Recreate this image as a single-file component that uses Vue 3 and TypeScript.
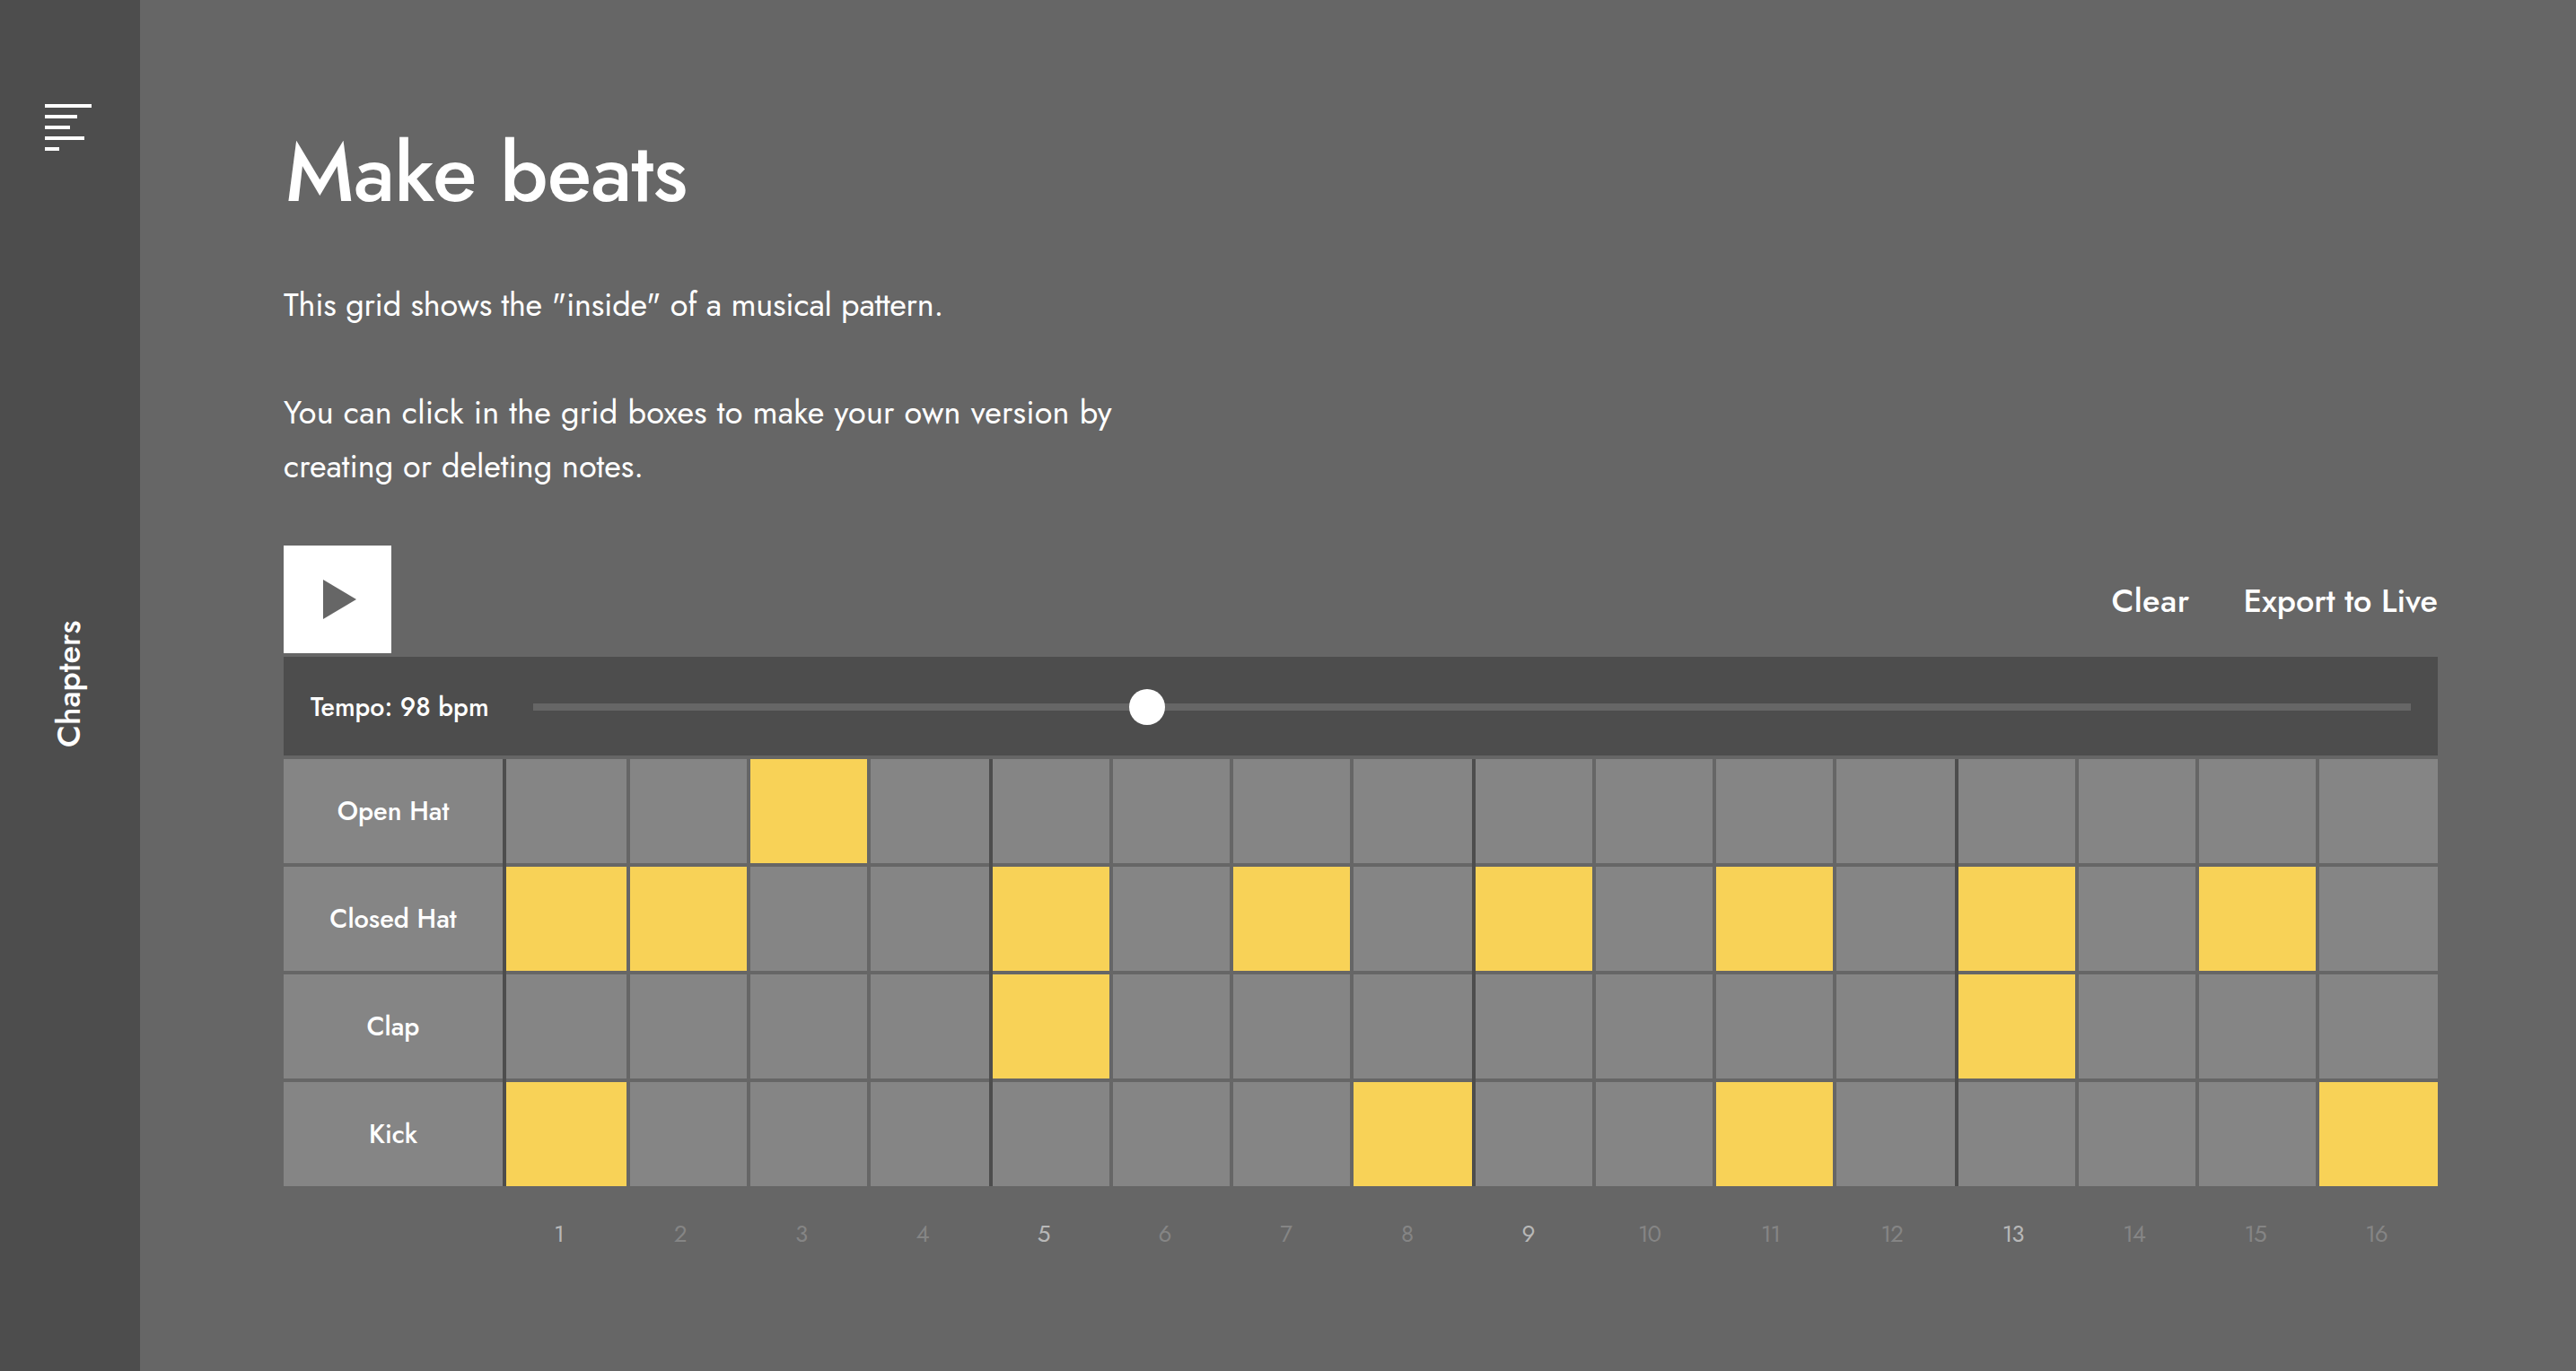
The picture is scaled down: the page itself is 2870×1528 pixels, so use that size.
<script setup lang="ts">
interface Track {
  name: string
  notes: number[]
}

const tracks: Track[] = [
  { name: 'Open Hat', notes: [3] },
  { name: 'Closed Hat', notes: [1, 2, 5, 7, 9, 11, 13, 15] },
  { name: 'Clap', notes: [5, 13] },
  { name: 'Kick', notes: [1, 8, 11, 16] },
]
const steps = Array.from({ length: 16 }, (_, i) => i + 1)
const isDownbeat = (step: number) => step % 4 === 1
</script>

<template>
  <div class="page">
    <nav class="sidebar">
      <svg class="menu" width="52" height="52" viewBox="0 0 52 52" fill="#fff">
        <rect width="52" height="4" />
        <rect y="12" width="36" height="4" />
        <rect y="24" width="28" height="4" />
        <rect y="36" width="44" height="4" />
        <rect y="48" width="16" height="4" />
      </svg>
      <span class="chapters">Chapters</span>
    </nav>
    <main class="content">
      <h1>Make beats</h1>
      <p class="intro">This grid shows the "inside" of a musical pattern.</p>
      <p class="hint"><span>You can click in the grid boxes to make your own version by</span><br />creating or deleting notes.</p>
      <div class="toolbar">
        <button class="play" aria-label="Play">
          <svg width="37" height="44" viewBox="0 0 37 44"><path d="M0 0L37 22L0 44Z" fill="#666" /></svg>
        </button>
        <div class="actions">
          <a class="clear">Clear</a>
          <a>Export to Live</a>
        </div>
      </div>
      <div class="tempo">
        <span class="tempo-label">Tempo: 98 bpm</span>
        <div class="slider"><div class="thumb"></div></div>
      </div>
      <div class="grid">
        <div v-for="track in tracks" :key="track.name" class="row">
          <div class="name"><span>{{ track.name }}</span></div>
          <div
            v-for="step in steps"
            :key="step"
            class="cell"
            :class="{ on: track.notes.includes(step), downbeat: isDownbeat(step) }"
          ></div>
        </div>
      </div>
      <div class="counts">
        <span v-for="step in steps" :key="step" :class="{ strong: isDownbeat(step) }">{{ step }}</span>
      </div>
    </main>
  </div>
</template>

<style>
body {
  background: #666;
}
</style>

<style scoped>
.page {
  display: flex;
  width: 2870px;
  height: 1528px;
  overflow: hidden;
  background: #666;
  color: #fff;
  font-family: Jost, Lato, sans-serif;
  font-weight: 400;
}
.sidebar {
  width: 156px;
  flex: none;
  box-sizing: border-box;
  background: #4d4d4d;
  display: flex;
  flex-direction: column;
  padding: 101px 0 0 50px;
}
.menu {
  display: block;
  margin-top: 15px;
}
.chapters {
  margin: 523px 0 0 -4px;
  width: 60px;
  height: 150px;
  line-height: 60px;
  writing-mode: vertical-rl;
  transform: rotate(180deg);
  font-size: 36px;
  font-weight: 500;
  text-align: right;
}
.content {
  width: 2400px;
  padding: 133px 0 0 160px;
}
h1 {
  margin: 0 0 0 2px;
  font-size: 91px;
  line-height: 120px;
  font-weight: 500;
  letter-spacing: -0.7px;
}
p {
  margin: 0;
  font-size: 36px;
  line-height: 60px;
}
.intro {
  margin-top: 56px;
  letter-spacing: -0.23px;
}
.hint {
  margin-top: 60px;
}
.hint span {
  letter-spacing: 0.2px;
}
.toolbar {
  margin-top: 59px;
  height: 120px;
  display: flex;
  justify-content: space-between;
  align-items: center;
}
.play {
  width: 120px;
  height: 120px;
  padding: 0 0 0 4px;
  border: 0;
  background: #fff;
  display: flex;
  align-items: center;
  justify-content: center;
}
.actions {
  display: flex;
  gap: 60px;
  padding-top: 1px;
  font-size: 36px;
  font-weight: 500;
}
.clear {
  letter-spacing: 0.5px;
}
.tempo {
  box-sizing: border-box;
  margin-top: 4px;
  height: 110px;
  background: #4d4d4d;
  display: flex;
  align-items: center;
  padding: 2px 30px 0;
}
.tempo-label {
  width: 248px;
  flex: none;
  font-size: 28.5px;
  font-weight: 500;
}
.slider {
  flex: 1;
  height: 8px;
  background: #666;
  display: flex;
  align-items: center;
}
.thumb {
  width: 40px;
  height: 40px;
  margin-left: 664px;
  border-radius: 50%;
  background: #fff;
}
.grid {
  margin-top: 4px;
  display: flex;
  flex-direction: column;
  gap: 4px;
}
.row {
  display: grid;
  grid-template-columns: 244px 134px 130px 130px 132px 130px 130px 130px 132px 130px 130px 130px 132px 130px 130px 130px 132px;
  column-gap: 4px;
  height: 116px;
}
.name {
  background: #858585;
  display: flex;
  align-items: center;
  justify-content: center;
  font-size: 29px;
  line-height: 40px;
  font-weight: 500;
}
.cell {
  position: relative;
  background: #858585;
}
.cell.on {
  background: #f8d257;
}
.downbeat::before {
  content: '';
  position: absolute;
  left: -4px;
  top: 0;
  bottom: -4px;
  width: 4px;
  background: #4d4d4d;
}
.row:last-child .downbeat::before {
  bottom: 0;
}
.counts {
  display: grid;
  grid-template-columns: repeat(16, 135px);
  margin: 33px 0 0 239px;
  font-size: 26px;
  line-height: 40px;
  font-weight: 400;
  letter-spacing: -1.2px;
  text-align: center;
  color: #858585;
}
.counts .strong {
  color: #b8b8b8;
}
</style>
